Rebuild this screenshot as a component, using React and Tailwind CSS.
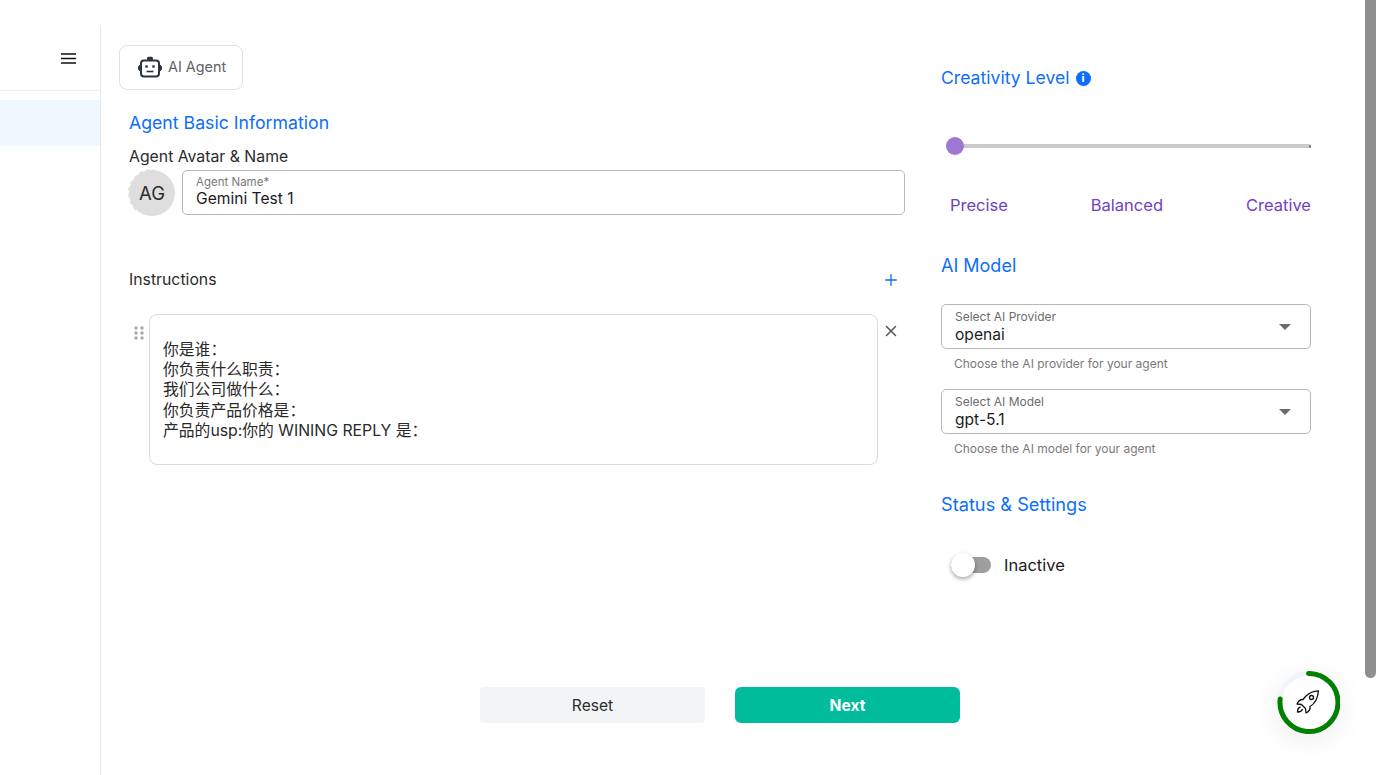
import React from "react";
import { Plus, X } from "lucide-react";

const cjk = "font-['Inter','Noto_Sans_CJK_SC',sans-serif]";

function Robot() {
  return (
    <svg width="26" height="22" viewBox="0 0 26 22" fill="none" stroke="#2b333b" strokeWidth="2">
      <rect x="4" y="4.500" width="18" height="16" rx="3" />
      <rect x="10" y="0.800" width="6" height="3.500" rx="1.500" fill="#2b333b" stroke="none" />
      <path d="M3.500 9C2 9.300 1.500 10.500 1.500 12s.5 2.700 2 3M22.500 9c1.500.3 2 1.500 2 3s-.5 2.700-2 3" fill="#2b333b" strokeWidth="1" />
      <rect x="8.300" y="9.300" width="2.400" height="2.400" fill="#2b333b" stroke="none" />
      <rect x="15.300" y="9.300" width="2.400" height="2.400" fill="#2b333b" stroke="none" />
      <path d="M9.500 15.500h7" strokeWidth="1.600" />
    </svg>
  );
}

function Rocket() {
  return (
    <svg className="mb-[2px] mr-[2px]" width="24" height="24" viewBox="0 0 24 24" fill="none" stroke="#111" strokeWidth="1.300" strokeLinejoin="round">
      <path d="M22.500.8C17 1 12.500 3 9.500 6.500L7 9.500C4.500 9.300 2.500 10.800 1 14l4.500.5 4 4 .5 4.500c3-1.500 4.500-3.500 4-6.500C18.500 14 21.800 8 22.500.8z" />
      <circle cx="15.500" cy="7.500" r="2" />
      <path d="M4.500 17c-2 .5-3 2.500-3 5 2.500 0 4.500-1 5-3" />
    </svg>
  );
}

function SelectBox({ label, value, help }) {
  return (
    <div>
      <div className="relative h-[45px] rounded-[5px] border border-[#b8b8b8] pl-[13px] pt-[4.500px]">
        <div className="text-[12px] leading-[14px] text-[#6c6c6c]">{label}</div>
        <div className="mt-[1px] text-[15.600px] leading-[20px] text-[#1c1c1c]">{value}</div>
        <div className="absolute right-[19px] top-[19px] h-0 w-0 border-x-[6px] border-t-[6px] border-x-transparent border-t-[#6b6b6b]" />
      </div>
      <p className="mt-[7px] pl-[13px] text-[12px] leading-[16px] text-[#7a7a7a]">{help}</p>
    </div>
  );
}

export default function App() {
  return (
    <div className={`relative flex h-[775px] w-[1379px] overflow-hidden bg-white pt-[26px] ${cjk}`}>
      {/* sidebar */}
      <aside className="h-full w-[101px] shrink-0 border-r border-[#e5e7eb]">
        <div className="flex h-[65px] items-center justify-end border-b border-[#f0f0f0] pr-[24px]">
          <svg width="15" height="11" viewBox="0 0 15 11" stroke="#111" strokeWidth="1.400">
            <path d="M0 1h15M0 5.500h15M0 10h15" />
          </svg>
        </div>
        <div className="mt-[9px] h-[46px] bg-[#eff7ff]" />
      </aside>

      <main className="flex w-[1238px] flex-col">
        <div className="flex">
          {/* left column */}
          <section className="w-[804px] pl-[18px] pt-[19px]">
            <div className="flex h-[45px] w-[124px] items-center gap-[5px] rounded-[8px] border border-[#dfe1e6] pb-[1px] pl-[17px] text-[14.400px] text-[#5f6368]">
              <Robot />
              AI Agent
            </div>
            <div className="pl-[10px]">
              <h2 className="mt-[22px] text-[17.700px] leading-[22px] text-[#0d6efd]">Agent Basic Information</h2>
              <div className="mt-[14px] text-[15.800px] leading-[18px] text-[#2c2c2c]">Agent Avatar &amp; Name</div>
              <div className="mt-[4px] flex gap-[7px]">
                <div className="relative flex h-[46px] w-[46px] shrink-0 items-center justify-center rounded-full bg-[#dedede] pt-[1px] text-[18.500px] text-[#2c2c2c]">
                  <svg className="absolute left-[-1px] top-[-1px]" width="48" height="48" viewBox="0 0 48 48" fill="none">
                    <path d="M8 41A23.500 23.500 0 0 1 27 .7" stroke="#e2e2e2" strokeWidth="1.500" strokeDasharray="4 3" />
                  </svg>
                  <span className="relative">AG</span>
                </div>
                <div className="h-[45px] w-[723px] rounded-[5px] border border-[#b8b8b8] pl-[13px] pt-[4px]">
                  <div className="text-[11.500px] leading-[14px] text-[#7a7a7a]">Agent Name*</div>
                  <div className="text-[15.600px] leading-[20px] text-[#1c1c1c]">Gemini Test 1</div>
                </div>
              </div>
              <div className="mt-[54px] flex h-[20px] w-[771px] items-center justify-between">
                <span className="text-[15.800px] text-[#2c2c2c]">Instructions</span>
                <Plus size={18} strokeWidth={1.800} color="#0d6efd" />
              </div>
            </div>
            <div className="mt-[24px] flex items-start pl-[13px]">
              <div className="w-[17px] pl-[2px] pt-[12px]">
                <svg width="10" height="14" viewBox="0 0 10 14" fill="#a8a8a8">
                  <circle cx="2" cy="2" r="1.700" /><circle cx="8" cy="2" r="1.700" />
                  <circle cx="2" cy="7" r="1.700" /><circle cx="8" cy="7" r="1.700" />
                  <circle cx="2" cy="12" r="1.700" /><circle cx="8" cy="12" r="1.700" />
                </svg>
              </div>
              <div className="h-[151px] w-[729px] rounded-[8px] border border-[#dcdcdc] pl-[13px] pt-[24.500px] text-[15.800px] leading-[20.400px] text-[#2a2a2a]">
                <div>你是谁：</div>
                <div>你负责什么职责：</div>
                <div>我们公司做什么：</div>
                <div>你负责产品价格是：</div>
                <div>产品的usp:你的 WINING REPLY 是：</div>
              </div>
              <div className="pl-[4px] pt-[8px]">
                <X size={18} strokeWidth={2} color="#555" />
              </div>
            </div>
          </section>

          {/* right column */}
          <section className="ml-[36px] w-[370px] pt-[40px]">
            <div className="flex h-[24px] items-center gap-[6px]">
              <h2 className="text-[17.600px] text-[#0d6efd]">Creativity Level</h2>
              <div className="flex h-[15px] w-[15px] items-center justify-center rounded-full bg-[#0d6efd] text-[11px] font-bold leading-none text-white">i</div>
            </div>
            <div className="relative ml-[14px] mt-[54px] h-[4px] rounded-full bg-[#cbcbcb]">
              <div className="absolute right-0 top-[1px] h-[3px] w-[2px] bg-[#8a8a8a]" />
              <div className="absolute left-[-9px] top-[-7px] h-[18px] w-[18px] rounded-full bg-[#9c78d0]" />
            </div>
            <div className="mt-[46px] flex justify-between pl-[9px] text-[16.500px] leading-[22px] text-[#6f42c1]">
              <span>Precise</span>
              <span>Balanced</span>
              <span>Creative</span>
            </div>
            <h2 className="mt-[38px] text-[18px] leading-[24px] text-[#0d6efd]">AI Model</h2>
            <div className="mt-[26px] flex flex-col gap-[17px]">
              <SelectBox label="Select AI Provider" value="openai" help="Choose the AI provider for your agent" />
              <SelectBox label="Select AI Model" value="gpt-5.1" help="Choose the AI model for your agent" />
            </div>
            <h2 className="mt-[35px] text-[18.200px] leading-[24px] text-[#0d6efd]">Status &amp; Settings</h2>
            <div className="mt-[37px] flex h-[24px] items-center pl-[10px]">
              <div className="relative h-[16px] w-[40px] rounded-full bg-[#9e9e9e]">
                <div className="absolute left-0 top-[-4px] h-[24px] w-[24px] rounded-full bg-white shadow-[0_2px_4px_rgba(0,0,0,0.35)]" />
              </div>
              <span className="ml-[13px] text-[16.500px] text-[#1c1c1c]">Inactive</span>
            </div>
          </section>
        </div>

        {/* footer buttons */}
        <div className="mt-[110px] flex justify-center gap-[30px]">
          <button className="h-[36px] w-[225px] rounded-[4px] bg-[#f3f4f6] pt-[1px] text-[15.600px] text-[#2c2c2c]">Reset</button>
          <button className="h-[36px] w-[225px] rounded-[6px] bg-[#00bc9b] pt-[1px] text-[15.600px] font-bold text-white">Next</button>
        </div>
      </main>

      {/* scrollbar */}
      <div className="absolute right-[3px] top-0 h-[678px] w-[11px] rounded-b-[6px] bg-[#8f8f8f]" />

      {/* floating progress button */}
      <div className="absolute left-[1277px] top-[671px] flex h-[63px] w-[63px] items-center justify-center rounded-full bg-white shadow-[0_6px_30px_rgba(0,0,0,0.08)]">
        <svg className="absolute inset-0" width="63" height="63" viewBox="0 0 63 63" fill="none">
          <circle cx="31.500" cy="31.500" r="29" stroke="#f1f4f9" strokeWidth="5" />
          <path d="M31.500 2.500A29 29 0 1 1 3.200 28" stroke="#008000" strokeWidth="5" strokeLinecap="round" />
        </svg>
        <Rocket />
      </div>
    </div>
  );
}
